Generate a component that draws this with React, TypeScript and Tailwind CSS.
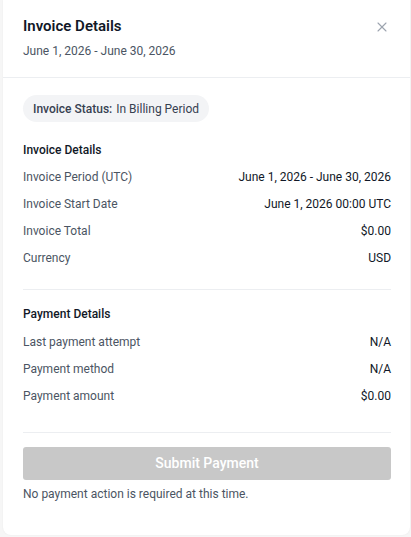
import { X } from "lucide-react";

const invoiceRows = [
  { label: "Invoice Period (UTC)", value: "June 1, 2026 - June 30, 2026" },
  { label: "Invoice Start Date", value: "June 1, 2026 00:00 UTC" },
  { label: "Invoice Total", value: "$0.00" },
  { label: "Currency", value: "USD" },
];

const paymentRows = [
  { label: "Last payment attempt", value: "N/A" },
  { label: "Payment method", value: "N/A" },
  { label: "Payment amount", value: "$0.00" },
];

function Row({ label, value }: { label: string; value: string }) {
  return (
    <div className="flex justify-between items-center h-5 text-[12px] leading-5">
      <span className="text-[#4b5563]">{label}</span>
      <span className="text-[#111827]">{value}</span>
    </div>
  );
}

export default function App() {
  return (
    <div
      className="min-h-screen bg-[#f6f6f6] pl-[3px] pr-px"
      style={{ fontFamily: "Roboto, 'Liberation Sans', sans-serif" }}
    >
      <div className="bg-white h-[535px] rounded-b-lg shadow-[0_0_2px_rgba(0,0,0,0.06)] flex flex-col">
        {/* header */}
        <div className="relative px-5 pt-[14px] pb-[16px] border-b border-[#eceef1]">
          <h1 className="text-[15px] leading-6 font-semibold text-[#111827]">Invoice Details</h1>
          <p className="mt-[3px] text-[12px] leading-5 text-[#4b5563]">June 1, 2026 - June 30, 2026</p>
          <button className="absolute right-[20px] top-[19px] text-[#9ca3af]">
            <X size={16} strokeWidth={1.6} />
          </button>
        </div>

        <div className="pl-5 pr-[19px] pt-[17px]">
          <div className="inline-flex items-center h-[27px] px-[10px] rounded-full bg-[#f3f4f6] text-[12px] text-[#374151]">
            <span className="font-medium">Invoice Status:</span>
            <span className="ml-1">In Billing Period</span>
          </div>

          <h2 className="mt-[18px] text-[12px] leading-5 font-medium text-[#111827]">Invoice Details</h2>
          <div className="mt-[7px] flex flex-col gap-[7px]">
            {invoiceRows.map((r) => (
              <Row key={r.label} label={r.label} value={r.value} />
            ))}
          </div>

          <div className="mt-[21px] border-t border-[#eceef1]" />

          <h2 className="mt-[14px] text-[12px] leading-5 font-medium text-[#111827]">Payment Details</h2>
          <div className="mt-[8px] flex flex-col gap-[7px]">
            {paymentRows.map((r) => (
              <Row key={r.label} label={r.label} value={r.value} />
            ))}
          </div>

          <div className="mt-[26px] border-t border-[#eceef1]" />

          <button
            disabled
            className="mt-[14px] w-full h-[33px] rounded-[3px] bg-[#c8c8c8] text-white text-[14px] font-medium"
          >
            Submit Payment
          </button>
          <p className="mt-1 text-[12px] leading-5 text-[#4b5563]">No payment action is required at this time.</p>
        </div>
      </div>
    </div>
  );
}
